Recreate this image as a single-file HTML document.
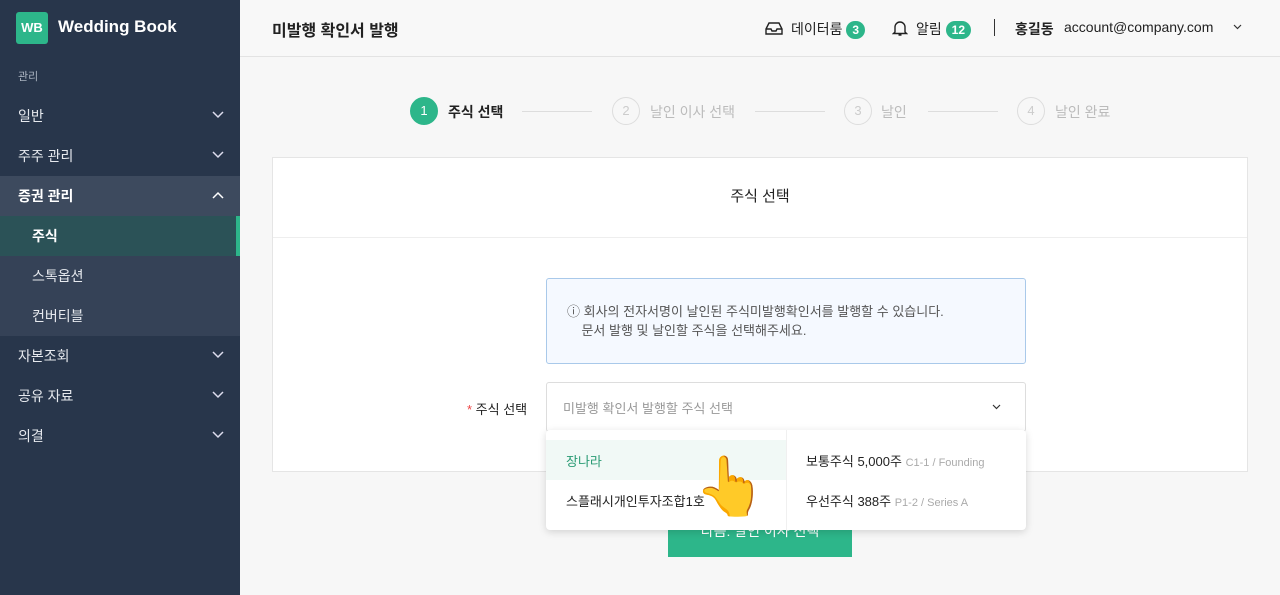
<!DOCTYPE html>
<html><head><meta charset="utf-8"><style>
*{box-sizing:border-box;margin:0;padding:0}
body{width:1280px;height:595px;overflow:hidden;font-family:"Liberation Sans","Noto Sans CJK KR",sans-serif;background:#f7f7f7;position:relative;color:#222}
.sb{position:absolute;left:0;top:0;width:240px;height:595px;background:#28364b;color:#e6e9ee}
.logo{position:absolute;left:16px;top:12px;width:32px;height:32px;background:#2db68a;border-radius:3px;color:#fff;font-weight:bold;font-size:13px;text-align:center;line-height:32px}
.brand{position:absolute;left:58px;top:17px;font-size:17px;font-weight:bold;color:#fff}
.sec{position:absolute;left:18px;top:68px;font-size:11px;color:#aab3c0}
.it{position:absolute;left:0;width:240px;height:40px;line-height:40px;padding-left:18px;font-size:14px;color:#e6e9ee}
.it svg{position:absolute;right:16px;top:15px}
.sub{padding-left:32px}
.hd{position:absolute;left:240px;top:0;width:1040px;height:57px;border-bottom:1px solid #e3e3e3;background:#f8f8f8}
.badge{display:inline-block;background:#2db68a;color:#fff;border-radius:10px;font-size:12px;font-weight:bold;height:18px;line-height:18px;padding:0 6px;vertical-align:middle}
.ab{position:absolute;font-size:14px}
.step{position:absolute;top:97px;font-size:14px;color:#bbb}
.circ{position:absolute;top:97px;width:28px;height:28px;border-radius:50%;border:1px solid #ddd;color:#ccc;text-align:center;line-height:26px;font-size:13px;background:#f7f7f7}
.line{position:absolute;top:111px;height:1px;background:#ddd}
.card{position:absolute;left:272px;top:157px;width:976px;height:315px;background:#fff;border:1px solid #e5e5e5}
</style></head><body>
<div class="sb">
<div class="logo">WB</div><div class="brand">Wedding Book</div>
<div class="sec">관리</div>
<div class="it" style="top:96px">일반<svg width="12" height="8"><path d="M1 1l5 5 5-5" stroke="#dde" stroke-width="1.5" fill="none"/></svg></div>
<div class="it" style="top:136px">주주 관리<svg width="12" height="8"><path d="M1 1l5 5 5-5" stroke="#dde" stroke-width="1.5" fill="none"/></svg></div>
<div class="it" style="top:176px;background:#3d4a5e;font-weight:bold;color:#fff">증권 관리<svg width="12" height="8"><path d="M1 7l5-5 5 5" stroke="#fff" stroke-width="1.5" fill="none"/></svg></div>
<div class="it sub" style="top:216px;background:#2b5257;font-weight:bold;color:#fff">주식<div style="position:absolute;right:0;top:0;width:4px;height:40px;background:#2db68a"></div></div>
<div class="it sub" style="top:256px;background:#354257">스톡옵션</div>
<div class="it sub" style="top:296px;background:#354257">컨버티블</div>
<div class="it" style="top:336px">자본조회<svg width="12" height="8"><path d="M1 1l5 5 5-5" stroke="#dde" stroke-width="1.5" fill="none"/></svg></div>
<div class="it" style="top:376px">공유 자료<svg width="12" height="8"><path d="M1 1l5 5 5-5" stroke="#dde" stroke-width="1.5" fill="none"/></svg></div>
<div class="it" style="top:416px">의결<svg width="12" height="8"><path d="M1 1l5 5 5-5" stroke="#dde" stroke-width="1.5" fill="none"/></svg></div>
</div>
<div class="hd">
<div class="ab" style="left:32px;top:17px;font-size:16px;font-weight:bold">미발행 확인서 발행</div>
<svg style="position:absolute;left:525px;top:21px" width="18" height="15"><path d="M1 8l3-6h10l3 6v5H1z M1 8h5l1 2h4l1-2h5" stroke="#222" stroke-width="1.4" fill="none"/></svg>
<div class="ab" style="left:551px;top:19px">데이터룸 <span class="badge">3</span></div>
<svg style="position:absolute;left:652px;top:19px" width="16" height="18"><path d="M3 13V8a5 5 0 0110 0v5l1.5 1.5h-13z M6.5 16h3" stroke="#222" stroke-width="1.4" fill="none"/></svg>
<div class="ab" style="left:676px;top:19px">알림 <span class="badge">12</span></div>
<div style="position:absolute;left:754px;top:19px;width:1px;height:17px;background:#333"></div>
<div class="ab" style="left:775px;top:19px;font-weight:bold">홍길동</div>
<div class="ab" style="left:824px;top:19px">account@company.com</div>
<svg style="position:absolute;left:993px;top:24px" width="9" height="6"><path d="M1 1l3.5 3.5L8 1" stroke="#333" stroke-width="1.2" fill="none"/></svg>
</div>
<div class="circ" style="left:410px;background:#2db68a;border-color:#2db68a;color:#fff">1</div>
<div class="step" style="left:448px;top:102px;color:#222;font-weight:bold">주식 선택</div>
<div class="line" style="left:522px;width:70px"></div>
<div class="circ" style="left:612px">2</div>
<div class="step" style="left:650px;top:102px">날인 이사 선택</div>
<div class="line" style="left:755px;width:70px"></div>
<div class="circ" style="left:844px">3</div>
<div class="step" style="left:881px;top:102px">날인</div>
<div class="line" style="left:928px;width:70px"></div>
<div class="circ" style="left:1017px">4</div>
<div class="step" style="left:1055px;top:102px">날인 완료</div>
<div class="card">
<div style="height:80px;border-bottom:1px solid #eee;text-align:center;line-height:78px;font-size:15px">주식 선택</div>
<div style="position:absolute;left:273px;top:120px;width:480px;height:86px;background:#f5f9ff;border:1px solid #a9c9ea;border-radius:3px;font-size:13px;color:#555;padding:23px 0 0 20px;line-height:19px">ⓘ 회사의 전자서명이 날인된 주식미발행확인서를 발행할 수 있습니다.<br>&nbsp;&nbsp;&nbsp;&nbsp;문서 발행 및 날인할 주식을 선택해주세요.</div>
<div style="position:absolute;left:194px;top:241px;font-size:13px"><span style="color:#e44">*</span> 주식 선택</div>
<div style="position:absolute;left:273px;top:224px;width:480px;height:50px;border:1px solid #ddd;border-radius:3px;font-size:13px;color:#999;padding:15px 0 0 16px">미발행 확인서 발행할 주식 선택
<svg style="position:absolute;right:24px;top:21px" width="9" height="6"><path d="M1 1l3.5 3.5L8 1" stroke="#333" stroke-width="1.2" fill="none"/></svg></div>
</div>
<div style="position:absolute;left:668px;top:500px;width:184px;height:57px;background:#2db68a;color:#fff;text-align:center;line-height:62px;font-size:14px">다음: 날인 이사 선택</div>
<div style="position:absolute;left:546px;top:430px;width:480px;height:100px;background:#fff;border-radius:4px;box-shadow:0 2px 8px rgba(0,0,0,.15);font-size:13px">
<div style="position:absolute;left:0;top:10px;width:240px;height:40px;background:#f1f9f6;color:#2a9b74;padding:11px 0 0 20px">장나라</div>
<div style="position:absolute;left:0;top:50px;padding:11px 0 0 20px">스플래시개인투자조합1호</div>
<div style="position:absolute;left:240px;top:0;width:1px;height:100px;background:#f0f0f0"></div>
<div style="position:absolute;left:260px;top:21px">보통주식 5,000주 <span style="color:#aaa;font-size:11px">C1-1 / Founding</span></div>
<div style="position:absolute;left:260px;top:61px">우선주식 388주 <span style="color:#aaa;font-size:11px">P1-2 / Series A</span></div>
<div style="position:absolute;left:148px;top:28px;font-size:58px;line-height:1">👆</div>
</div>
</body></html>
